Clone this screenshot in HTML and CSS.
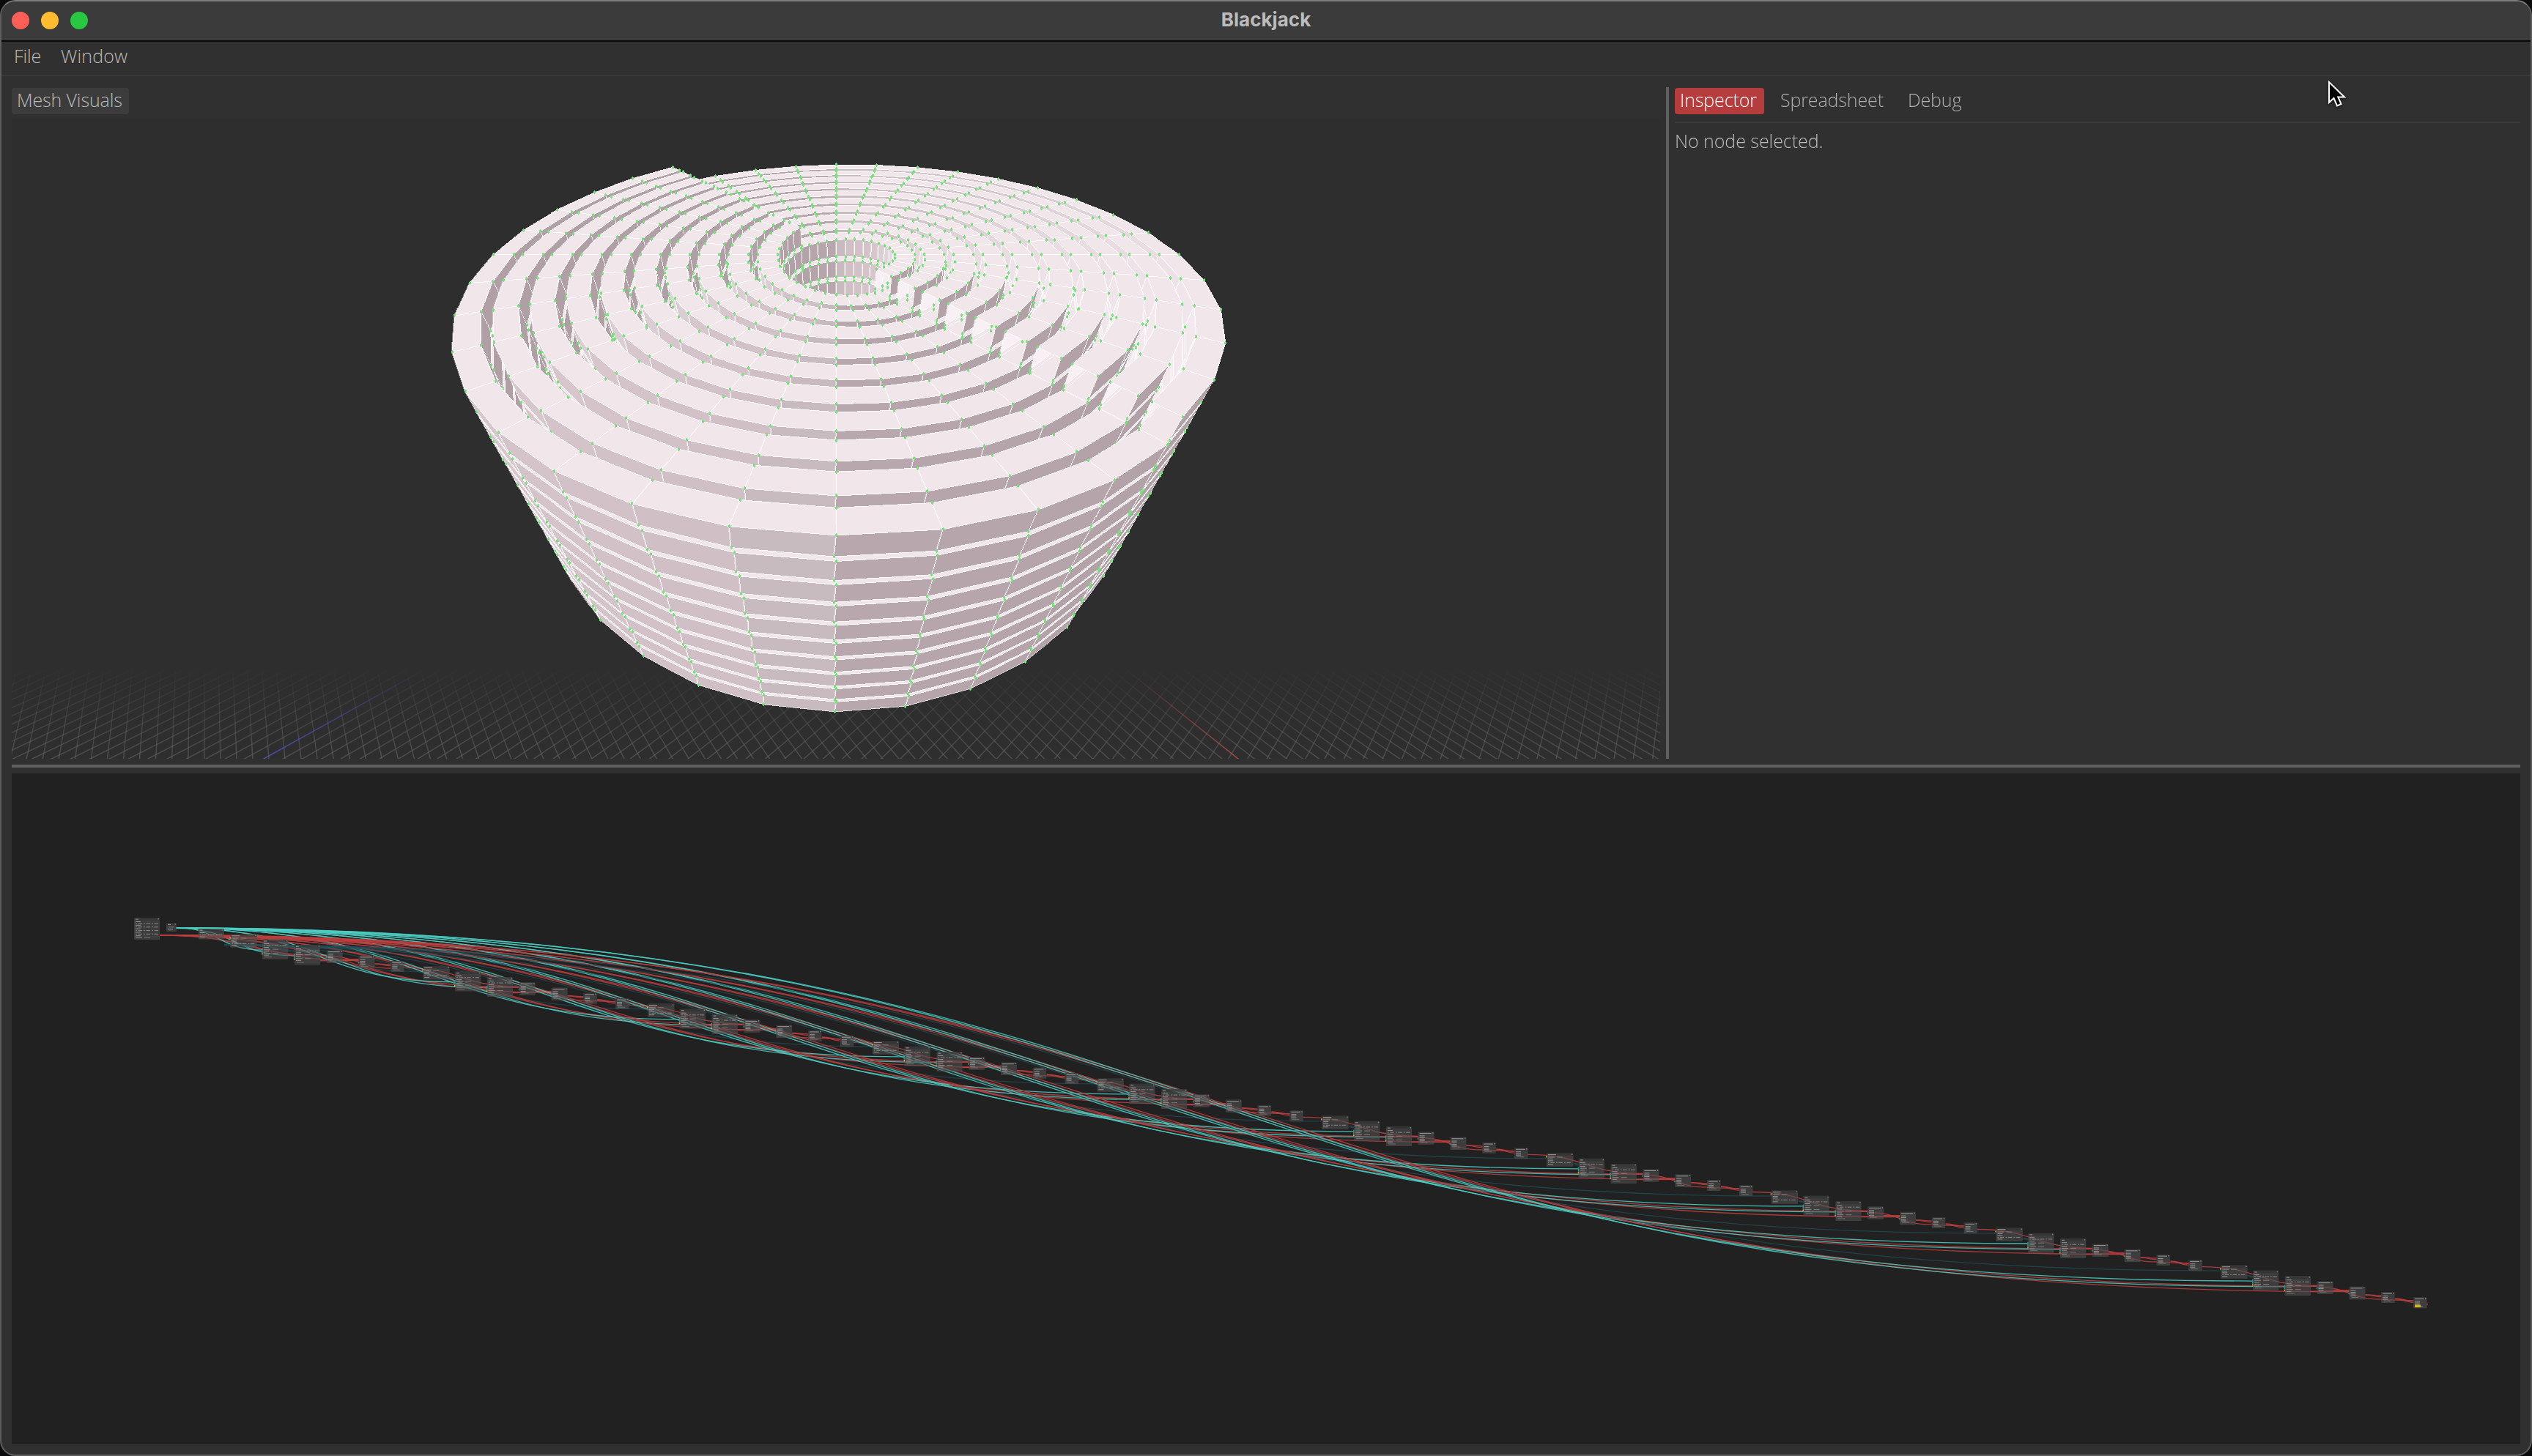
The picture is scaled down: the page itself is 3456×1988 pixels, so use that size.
FILE: index.html
```html
<!DOCTYPE html>
<html lang="en">
<head>
<meta charset="utf-8">
<title>Blackjack</title>
<link rel="stylesheet" href="styles.css">
</head>
<body>
<div class="window">
  <header class="titlebar">
    <div class="lights"><span class="light close"></span><span class="light minimise"></span><span class="light maximise"></span></div>
    <h1 class="title">Blackjack</h1>
  </header>
  <nav class="menubar"><span class="menu-file">File</span><span class="menu-window">Window</span></nav>
  <main class="workspace">
    <section class="upper">
      <div class="viewport-pane">
        <div class="toolbar"><button class="chip">Mesh Visuals</button></div>
        <canvas class="viewport" id="viewport" width="2250" height="874"></canvas>
      </div>
      <div class="divider-v"></div>
      <aside class="side">
        <div class="tabs"><span class="tab active">Inspector</span><span class="tab wide">Spreadsheet</span><span class="tab">Debug</span></div>
        <p class="empty">No node selected.</p>
      </aside>
    </section>
    <div class="divider-h"></div>
    <svg class="graph" id="graph" viewBox="16 1056 3424 916"></svg>
  </main>
</div>
<svg class="cursor" viewBox="0 0 28 40"><path d="M3 3V31L9.5 25L14 35.5L19.500 33L15.300 23.500H24Z" fill="#000" stroke="#fff" stroke-width="2"/></svg>
<script src="scene.js"></script>
</body>
</html>
```
FILE: styles.css
```css
* { box-sizing: border-box; }
body { margin: 0; width: 3456px; height: 1988px; overflow: hidden; background: #0a0c0e; font-family: "Open Sans", "Noto Sans", sans-serif; font-weight: 300; font-size: 25px; color: #bababa; letter-spacing: -.13px; }
.window { position: relative; width: 3456px; height: 1988px; display: flex; flex-direction: column; background: #303030; border: 2px solid #5e5e5e; border-top-color: #7c7d7d; border-radius: 21px; overflow: hidden; }
.titlebar { position: relative; height: 55px; flex: none; background: #3a3b3a; border-bottom: 2px solid #0a0a0a; display: flex; align-items: center; justify-content: center; }
.lights { position: absolute; left: 14px; top: 14px; display: flex; gap: 16px; }
.light { width: 24px; height: 24px; border-radius: 50%; }
.close { background: #ff5f57; }
.minimise { background: #febc2e; }
.maximise { background: #28c840; }
.title { margin: 0 0 4px; font: 700 26px/50px Inter, sans-serif; color: #bcbcbc; letter-spacing: .05px; }
.menubar { height: 47px; flex: none; border-bottom: 1px solid #3f3f3f; display: flex; padding: 1px 0 0 17px; line-height: 36px; gap: 27px; }
.menu-window { letter-spacing: .15px; }
.workspace { flex: 1; display: flex; flex-direction: column; padding: 15px 14px 14px; min-height: 0; }
.upper { display: flex; height: 917px; flex: none; }
.viewport-pane { width: 2250px; margin-right: 8px; display: flex; flex-direction: column; }
.toolbar { height: 43px; padding-top: 1px; }
.chip { display: flex; align-items: center; width: 160px; height: 36px; padding: 0 0 3px 7px; border: 0; border-radius: 4px; background: #3c3c3c; color: inherit; font: inherit; letter-spacing: inherit; line-height: 33px; white-space: nowrap; }
.viewport { display: block; width: 2250px; height: 874px; }
.divider-v { width: 4px; background: #606060; }
.side { flex: 1; padding-left: 8px; }
.tabs { display: flex; gap: 15px; height: 49px; border-bottom: 2px solid #3c3c3c; padding-top: 1px; }
.tab { width: 122px; height: 36px; padding: 0 7px; line-height: 33px; color: #adadad; white-space: nowrap; border-radius: 4px; }
.wide { width: 159px; }
.active { background: #b53d3d; color: #fff; }
.empty { margin: 6px 0 0; line-height: 36px; white-space: nowrap; letter-spacing: -.05px; }
.divider-h { height: 4px; margin: 8px 0; background: #606060; flex: none; }
.graph { display: block; width: 3424px; height: 916px; background: #212121; }
.cursor { position: absolute; left: 3176px; top: 109px; width: 28px; height: 40px; filter: drop-shadow(0 2px 2px rgba(0,0,0,.5)); }
```
FILE: scene.js
```js
/* ---------- 3D viewport ---------- */
const canvas = document.getElementById('viewport');
const W = canvas.width, H = canvas.height, OX = 16, OY = 162;
const ctx = canvas.getContext('2d');
ctx.fillStyle = '#2e2e2e';
ctx.fillRect(0, 0, W, H);

// Ground grid: two families of lines, each running to its own vanishing point.
function gridLine(xBottom, vx, rgb, alpha) {
  const vy = -90, yb = 1038, yt = 912;
  const at = y => vx + (xBottom - vx) * (y - vy) / (1036 - vy);
  const g = ctx.createLinearGradient(0, yt - OY, 0, yb - OY);
  g.addColorStop(0, `rgba(${rgb},0)`);
  g.addColorStop(1, `rgba(${rgb},${alpha})`);
  ctx.strokeStyle = g;
  ctx.lineWidth = 1.5;
  ctx.beginPath();
  ctx.moveTo(at(yt) - OX, yt - OY);
  ctx.lineTo(at(yb) - OX, yb - OY);
  ctx.stroke();
}
for (let i = -90; i < 130; i++) {
  if (i) {
    gridLine(1690 + i * 22.05, 277, '100,100,100', .6);
    gridLine(360 + i * 26.33, 2385, '100,100,100', .6);
  }
}
gridLine(1690, 277, '170,75,75', .95);
gridLine(360, 2385, '78,78,180', 1);

const img = ctx.getImageData(0, 0, W, H), px = img.data;
const depth = new Float32Array(W * H);
const rad = Math.PI / 180;

function project(r, a, h) {
  const X = r * Math.cos(a * rad), Z = r * Math.sin(a * rad);
  const w = 1 - .001 * Z + .00092 * h;
  return [1141 + X / w - OX, 347 + (.41 * Z + h) / w - OY, 1 / w];
}
function tri(p, q, r, c) {
  const area = (q[0] - p[0]) * (r[1] - p[1]) - (r[0] - p[0]) * (q[1] - p[1]);
  if (Math.abs(area) < 1e-6) return;
  const x0 = Math.max(0, Math.ceil(Math.min(p[0], q[0], r[0]))), x1 = Math.min(W - 1, Math.floor(Math.max(p[0], q[0], r[0])));
  const y0 = Math.max(0, Math.ceil(Math.min(p[1], q[1], r[1]))), y1 = Math.min(H - 1, Math.floor(Math.max(p[1], q[1], r[1])));
  for (let y = y0; y <= y1; y++) for (let x = x0; x <= x1; x++) {
    const u = ((q[0] - x) * (r[1] - y) - (r[0] - x) * (q[1] - y)) / area;
    const v = ((r[0] - x) * (p[1] - y) - (p[0] - x) * (r[1] - y)) / area;
    const t = 1 - u - v;
    if (u < -1e-6 || v < -1e-6 || t < -1e-6) continue;
    const d = u * p[2] + v * q[2] + t * r[2], k = y * W + x;
    if (d > depth[k]) { depth[k] = d; px[4 * k] = c[0]; px[4 * k + 1] = c[1]; px[4 * k + 2] = c[2]; }
  }
}
const edges = [], points = [];
function quad(a, b, c, d, col) {
  tri(a, b, c, col); tri(a, c, d, col);
  edges.push([a, b], [b, c], [c, d], [d, a]);
}
function blend(x, y, d, eps, c, al) {
  if (x < 0 || y < 0 || x >= W || y >= H) return;
  const k = y * W + x;
  if (d + eps < depth[k]) return;
  for (let i = 0; i < 3; i++) px[4 * k + i] += (c[i] - px[4 * k + i]) * al;
}

// Wall shade by the direction the wall faces (90 = towards the camera).
const shades = [[0, 176, 160, 165], [50, 178, 161, 167], [89, 185, 168, 174], [91, 199, 187, 192], [101, 200, 187, 192],
  [105, 208, 191, 197], [130, 213, 196, 202], [145, 218, 206, 211], [165, 228, 216, 221], [180, 236, 224, 229],
  [225, 248, 240, 244], [262, 243, 235, 238], [268, 176, 160, 165], [360, 176, 160, 165]];
function shade(n) {
  n = ((n % 360) + 360) % 360;
  let i = 1;
  while (shades[i][0] < n) i++;
  const a = shades[i - 1], b = shades[i], t = (n - a[0]) / (b[0] - a[0]);
  return [1, 2, 3].map(j => a[j] + (b[j] - a[j]) * t);
}
const TOP = [241, 231, 235], STEP = 31.7, WALL = 25.7;
// Each turn of the staircase is two half rings that climb at their own rate.
const arcs = [
  { from: -130, to: 50, h: a => -.12 * a },
  { from: 50, to: 230, h: a => { const d = 180 - a; return .25 * d - .00045 * d * d; } }
];
for (let ring = 0; ring < 10; ring++) {
  const o = 107 + 40.1 * ring, n = o - 27.4;
  for (let l = 0; l < 10; l++) for (const arc of arcs) {
    const P = (r, a, lift, turn = 0) => project(r, a + turn, arc.h(a) + STEP * l + lift);
    for (let a = arc.from; a < arc.to; a += 10) {
      const b = a + 10;
      quad(P(n, a, 0), P(o, a, 0), P(o, b, 0), P(n, b, 0), TOP);
      for (const [r, face] of [[o, a + 5], [n, a + 185]]) {
        quad(P(r, a, 0), P(r, b, 0), P(r, b, WALL, .22), P(r, a, WALL, .22), shade(face));
        if (l < 9) quad(P(r, a, WALL, .22), P(r, b, WALL, .22), P(r, b, STEP), P(r, a, STEP), TOP);
      }
    }
    for (let a = arc.from; a <= arc.to; a += 10)
      points.push(P(n, a, 0), P(o, a, 0), P(n, a, WALL, .22), P(o, a, WALL, .22));
  }
}
for (const [p, q] of edges) {
  const dx = q[0] - p[0], dy = q[1] - p[1], n = Math.ceil(Math.max(Math.abs(dx), Math.abs(dy))) || 1;
  const steep = Math.abs(dy) > Math.abs(dx);
  for (let i = 0; i <= n; i++) {
    const t = i / n, x = Math.round(p[0] + dx * t), y = Math.round(p[1] + dy * t), d = p[2] + (q[2] - p[2]) * t;
    blend(x, y, d, .003, [255, 252, 254], .75);
    if (steep) blend(x - 1, y, d, .001, [255, 252, 254], .2);
  }
}
for (const p of points) {
  const x = Math.round(p[0]), y = Math.round(p[1]);
  const k = y * W + x;
  if (x < 2 || y < 2 || x > W - 3 || y > H - 3 || p[2] + .004 < depth[k]) continue;
  for (let j = -2; j <= 2; j++) for (let i = -2; i <= 2; i++)
    if (Math.abs(i) + Math.abs(j) <= 2 && Math.abs(i) < 2) blend(x + i, y + j, p[2], .03, [115, 228, 120], 1);
}
ctx.putImageData(img, 0, 0);

/* ---------- node graph ---------- */
const TEAL = '#4ccdc2', RED = '#bb3f3f', DIM = '#205058';
let links = '', boxes = '';
const link = (x1, y1, x2, y2, c, o = .88) => {
  const k = Math.max((x2 - x1) / 2, 10);
  links += `<path d="M${x1} ${y1}C${x1 + k} ${y1} ${x2 - k} ${y2} ${x2} ${y2}" stroke="${c}" stroke-opacity="${o}"/>`;
};
const bar = (x, y, w, h, c) => { boxes += `<rect x="${x}" y="${y}" width="${w}" height="${h}" fill="${c}"/>`; };
function node(x, y, w, h, rows, kind) {
  boxes += `<rect x="${x}" y="${y}" width="${w}" height="${h}" rx="1" fill="#505050" fill-opacity=".6"/>`;
  bar(x, y, w, 3.5, 'rgba(46,46,46,.5)');
  bar(x + 2, y + 1.6, Math.min(w - 6, kind === 's' ? 13 : kind === 'm' ? 17 : kind === 'w' ? 11 : 4), 1.1, '#959595');
  bar(x + w - 2.5, y + 1, 1.5, 1.5, '#808080');
  rows.forEach((r, i) => {
    const yy = y + 5 + i * (h - 6) / rows.length;
    if (r === 3) for (let j = 0; j < 3; j++) { bar(x + 2 + j * 11, yy, 2, .9, '#888'); bar(x + 5.500 + j * 11, yy, 5.500, 1.1, '#808080'); }
    else if (r === 2) { bar(x + 2, yy, 9, 1, '#8c8c8c'); bar(x + 14, yy, 8, 1, '#7c7c7c'); }
    else if (r === 1) bar(x + 2, yy, Math.min(7, w - 6), 1, '#959595');
    else bar(x + 3, yy, Math.min(10, w - 6), 1, '#707070');
  });
}
node(183, 1253, 35, 30, [1, 3, 1, 3, 1, 3, 1, 3, 1, 2], 'b');
node(227, 1260.3, 14, 11.700, [0, 1], 'c');
node(270.5, 1268, 35.500, 14.500, [1, 3, 1], 'b');
const X = i => 577.200 + 43.82 * i, Y = i => 1319.300 + 7.29 * i;
for (let p = 0; p < 10; p++) {
  const s = p === 0 ? -6 : (p - 1) * 7;
  const n = p === 0 ? 6 : 7;
  const at = j => [X(s + j), Y(s + j)];
  const [wx, wy] = at(0), [ax, ay] = at(1), [bx, by] = at(2), [cx, cy] = at(3), [dx, dy] = at(4), [ex, ey] = at(5), [fx, fy] = at(6);
  link(306, 1290, wx, wy + 7.5, DIM, .7);
  link(wx + 37, wy + 14, ax, ay + 9, DIM, .7);
  link(wx + 37, wy + 14.500, bx, by + 9, DIM, .7);
  link(218, 1276.600, cx, cy + 7, RED);
  link(218, 1277.200, dx, dy + 7, RED);
  link(240, 1266.800, ax, ay + 14.200, TEAL);
  link(240, 1267.300, bx, by + 14.700, TEAL);
  if (p) link(wx - 26, wy + 2, cx, cy + 6, RED);
  link(ax + 35, ay + 21.300, cx, cy + 6.500, RED);
  link(bx + 35, by + 21, dx, dy + 5, RED);
  link(bx + 35, by + 21.600, dx, dy + 6.500, RED);
  link(cx + 22, cy + 12, dx, dy + 5.600, RED);
  link(cx, cy + 8, ex, ey + 10, RED);
  link(dx + 22, dy + 11, ex, ey + 5, RED);
  link(dx + 22, dy + 11.500, ex, ey + 6.600, RED);
  if (n === 7) {
    link(ex + 19, ey + 9, fx, fy + 5, RED);
    link(ex + 19, ey + 9.500, fx, fy + 7, RED);
    link(ex, ey + 10.500, fx, fy + 4.500, RED);
  }
  node(wx, wy, 36.5, 18.300, [2, 1, 1, 3, 1], 'w');
  node(ax, ay, 35.300, 27, [1, 3, 1, 2, 1, 2, 1, 0], 'b');
  node(bx, by, 35.300, 27, [1, 3, 1, 2, 1, 2, 1, 0], 'b');
  node(cx, cy, 22, 17.500, [1, 1, 1, 1, 0], 'm');
  node(dx, dy, 22, 17.500, [1, 1, 1, 1, 0], 'm');
  node(ex, ey, 18.500, 15, [1, 1, 1, 0], 's');
  if (n === 7) node(fx, fy, 18.500, 15, [1, 1, 1, 0], 's');
  bar(wx - 1, wy + 4, 1.5, 2, '#d8b43a');
  for (const [x, y] of [[ax, ay], [bx, by]]) { bar(x - 1, y + 18.500, 1.5, 2, '#d8b43a'); bar(x - 1, y + 12, 1.5, 6, '#2f8f8a'); }
  bar(cx - 1, cy + 8.500, 1.5, 2, '#2f8f8a');
  bar(dx - 1, dy + 8.500, 1.5, 2, '#2f8f8a');
}
bar(3296, 1781.500, 8, 3.500, '#d6b916');
bar(3312, 1780, 2, 1.5, '#bb3f3f');
document.getElementById('graph').innerHTML = `<g fill="none" stroke-width="1.3">${links}</g>${boxes}`;
```
